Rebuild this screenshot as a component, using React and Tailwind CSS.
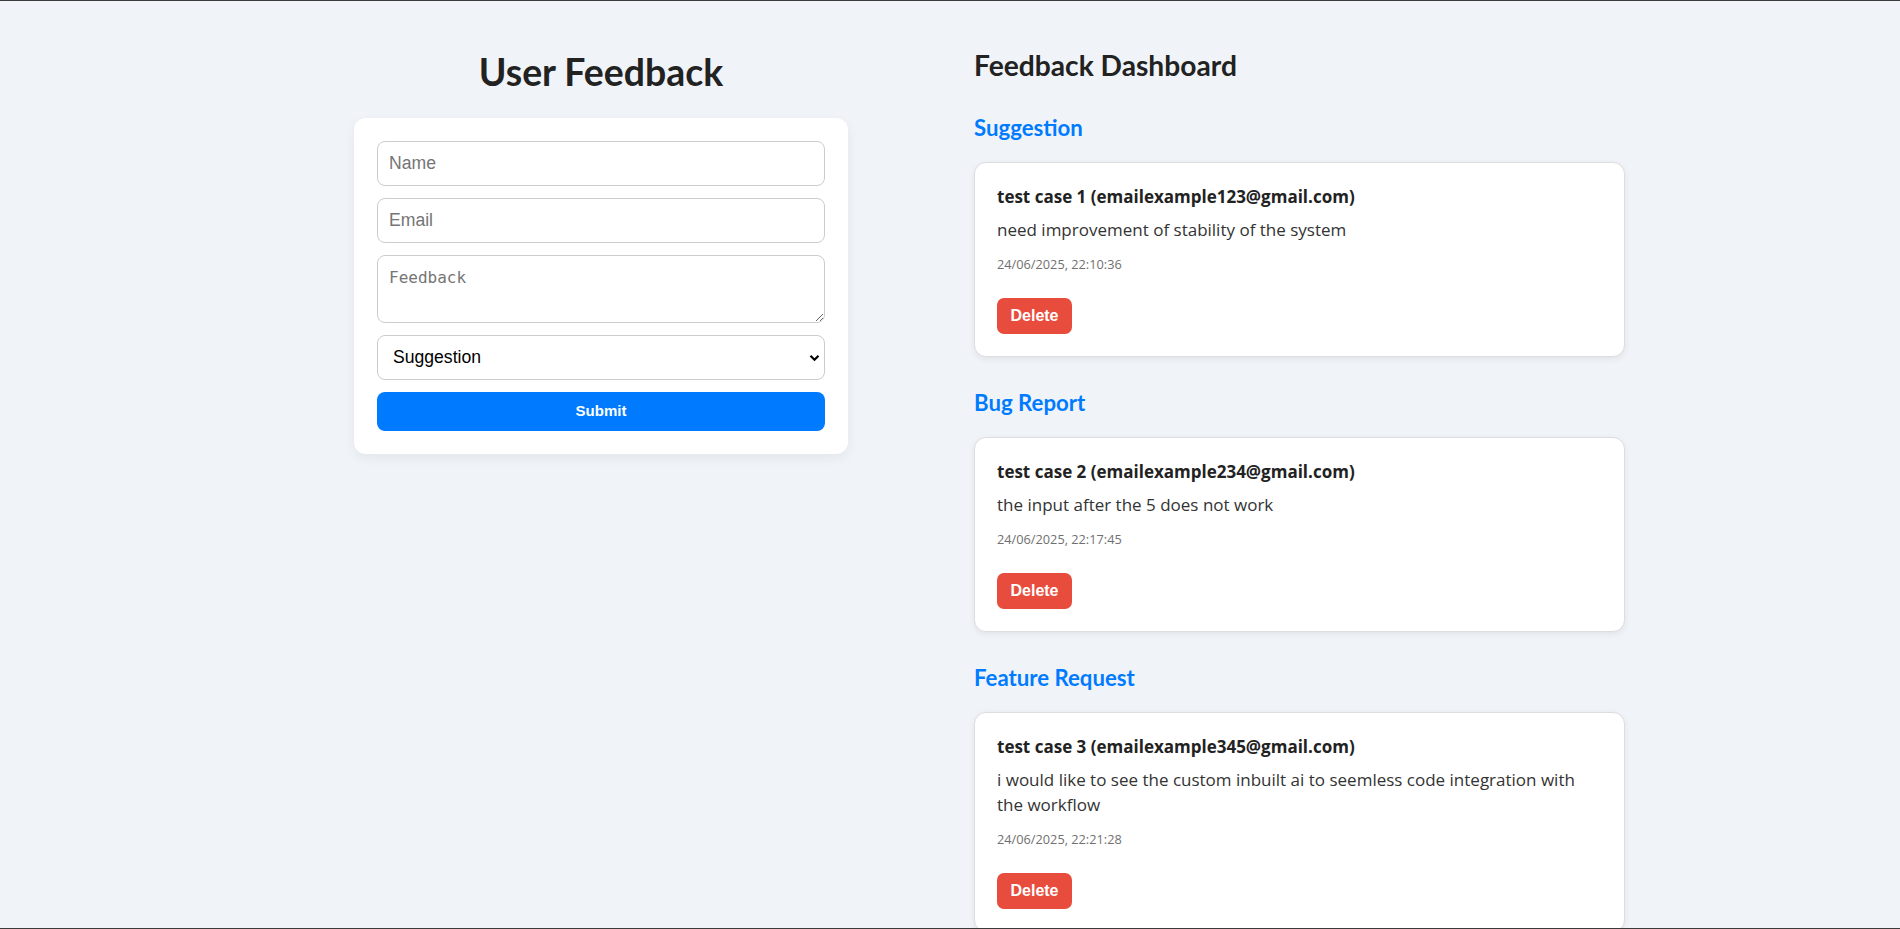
import { useState } from 'react'

const feedbacks = [
  {
    id: 1,
    category: 'Suggestion',
    name: 'test case 1',
    email: 'emailexample123@gmail.com',
    message: 'need improvement of stability of the system',
    time: '24/06/2025, 22:10:36',
  },
  {
    id: 2,
    category: 'Bug Report',
    name: 'test case 2',
    email: 'emailexample234@gmail.com',
    message: 'the input after the 5 does not work',
    time: '24/06/2025, 22:17:45',
  },
  {
    id: 3,
    category: 'Feature Request',
    name: 'test case 3',
    email: 'emailexample345@gmail.com',
    message: 'i would like to see the custom inbuilt ai to seemless code integration with the workflow',
    time: '24/06/2025, 22:21:28',
  },
]

function FeedbackCard({ item, onDelete }) {
  return (
    <div className="bg-white border border-[#dddddd] rounded-[12px] p-[22px] shadow-[0_2px_6px_rgba(0,0,0,0.07)] font-['Open_Sans',sans-serif]">
      <h4 className="text-[17px] leading-[24px] font-bold text-[#222]">
        {item.name} ({item.email})
      </h4>
      <p className="mt-[8px] text-[17px] leading-[25px] text-[#333]">{item.message}</p>
      <p className="mt-[12px] text-[12.75px] leading-[20px] text-[#707070]">{item.time}</p>
      <button
        onClick={() => onDelete(item.id)}
        className="mt-[24px] h-[36px] w-[75px] rounded-[7px] bg-[#e74c3c] text-white text-[16px] font-bold font-['Liberation_Sans',Arial,sans-serif]"
      >
        Delete
      </button>
    </div>
  )
}

export default function App() {
  const [items, setItems] = useState(feedbacks)
  const categories = ['Suggestion', 'Bug Report', 'Feature Request']

  function remove(id) {
    setItems(function (prev) { return prev.filter(function (f) { return f.id !== id }) })
  }

  return (
    <div className="h-screen overflow-hidden bg-[#f0f4f8] border-t border-b border-[#3a3a3a] font-['Lato',sans-serif]">
      <div className="flex gap-[126px] pl-[354px] pt-[46px]">

        {/* form */}
        <div className="w-[494px] shrink-0">
          <h1 className="text-center text-[37.4px] leading-[49px] font-bold text-[#222]">User Feedback</h1>
          <form
            className="mt-[22px] bg-white rounded-[12px] p-[23px] flex flex-col shadow-[0_4px_12px_rgba(0,0,0,0.06)] font-['Liberation_Sans',Arial,sans-serif]"
            onSubmit={(e) => e.preventDefault()}
          >
            <input
              placeholder="Name"
              className="h-[45px] w-full rounded-[8px] border border-[#cccccc] px-[11px] text-[17.6px] placeholder:text-[#757575] outline-none"
            />
            <input
              placeholder="Email"
              className="mt-[12px] h-[45px] w-full rounded-[8px] border border-[#cccccc] px-[11px] text-[17.6px] placeholder:text-[#757575] outline-none"
            />
            <textarea
              placeholder="Feedback"
              className="mt-[12px] h-[68px] w-full rounded-[8px] border border-[#cccccc] px-[11px] pt-[12px] text-[16px] leading-[19px] font-['DejaVu_Sans_Mono',monospace] placeholder:text-[#757575] outline-none"
            />
            <div className="relative mt-[12px]">
              <select className="appearance-none h-[45px] w-full rounded-[8px] border border-[#cccccc] bg-white pl-[15px] text-[17.6px] text-black outline-none">
                <option>Suggestion</option>
                <option>Bug Report</option>
                <option>Feature Request</option>
              </select>
              <svg className="pointer-events-none absolute right-[5px] top-[19px]" width="11" height="8" viewBox="0 0 11 8">
                <path d="M1.5 1.8 L5.5 5.8 L9.5 1.8" fill="none" stroke="#000" strokeWidth="2.2" />
              </svg>
            </div>
            <button className="mt-[12px] h-[39px] w-full rounded-[8px] bg-[#007bff] text-white text-[15px] font-bold">
              Submit
            </button>
          </form>
        </div>

        {/* dashboard */}
        <div className="w-[651px] shrink-0">
          <h2 className="text-[28.2px] leading-[36px] font-bold text-[#222]">Feedback Dashboard</h2>
          <div className="mt-[31px] flex flex-col gap-[32px]">
            {categories.map(function (cat) {
              const list = items.filter(function (f) { return f.category === cat })
              return (
                <section key={cat}>
                  <h3 className="text-[22.2px] leading-[28px] font-bold text-[#007bff]">{cat}</h3>
                  <div className="mt-[20px] flex flex-col gap-[16px]">
                    {list.map(function (f) {
                      return <FeedbackCard key={f.id} item={f} onDelete={remove} />
                    })}
                  </div>
                </section>
              )
            })}
          </div>
        </div>
      </div>
    </div>
  )
}
